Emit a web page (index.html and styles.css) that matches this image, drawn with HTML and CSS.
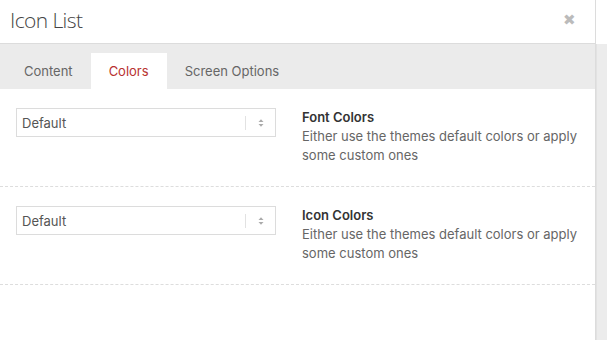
FILE: index.html
```html
<!DOCTYPE html>
<html lang="en">
<head>
    <meta charset="UTF-8">
    <title>Icon List</title>
    <link rel="stylesheet" href="styles.css">
</head>
<body>

    <div class="modal">
        <div class="modal-header">
            <h2 class="modal-title">Icon List</h2>
            <span class="modal-close">&#10006;</span>
        </div>

        <div class="modal-body">
            <div class="modal-main">
                <!-- Tabs -->
                <ul class="tabs">
                    <li class="tab">Content</li>
                    <li class="tab active">Colors</li>
                    <li class="tab">Screen Options</li>
                </ul>

                <div class="option-row">
                    <div class="option-field">
                        <div class="select">
                            <span class="select-value">Default</span>
                            <span class="select-arrows">
                                <svg width="6" height="10" viewBox="0 0 6 10">
                                    <path d="M0.5 4 L3 1.2 L5.5 4 Z" fill="#aaa"/>
                                    <path d="M0.5 6 L3 8.8 L5.5 6 Z" fill="#aaa"/>
                                </svg>
                            </span>
                        </div>
                    </div>
                    <div class="option-desc">
                        <h4>Font Colors</h4>
                        <p>Either use the themes default colors or apply some custom ones</p>
                    </div>
                </div>

                <div class="option-row">
                    <div class="option-field">
                        <div class="select">
                            <span class="select-value">Default</span>
                            <span class="select-arrows">
                                <svg width="6" height="10" viewBox="0 0 6 10">
                                    <path d="M0.5 4 L3 1.2 L5.5 4 Z" fill="#aaa"/>
                                    <path d="M0.5 6 L3 8.8 L5.5 6 Z" fill="#aaa"/>
                                </svg>
                            </span>
                        </div>
                    </div>
                    <div class="option-desc">
                        <h4>Icon Colors</h4>
                        <p>Either use the themes default colors or apply some custom ones</p>
                    </div>
                </div>
            </div>
            <div class="modal-side"></div>
        </div>
    </div>

</body>
</html>
```

FILE: styles.css
```css
body {
    font-family: Inter, "Liberation Sans", Arial, sans-serif;
    margin: 0;
    padding: 0;
    background: #fff;
    color: #333;
}
.modal {
    width: 607px;
    height: 340px;
    overflow: hidden;
}
.modal-header {
    height: 43px;
    display: flex;
    align-items: center;
    justify-content: space-between;
    border-bottom: 1px solid #dcdcdc;
    width: 595px;
    border-right: 1px solid #dcdcdc;
}
.modal-title {
    margin: 0 0 4px 10px;
    font-family: "Open Sans", sans-serif;
    font-weight: 300;
    font-size: 21px;
    color: #444;
    letter-spacing: -0.6px;
}
.modal-close {
    color: #bbb;
    font-size: 15px;
    margin-right: 19px;
    margin-bottom: 4px;
}
.modal-body {
    display: flex;
    height: 296px;
}
.modal-main {
    width: 595px;
    border-right: 1px solid #dcdcdc;
}
.modal-side {
    flex: 1;
    background: #ececec;
    border-left: 1px solid #e2e2e2;
}
.tabs {
    list-style: none;
    margin: 0;
    padding: 9px 0 0 6px;
    height: 36px;
    background: #ebebeb;
    display: flex;
}
.tab {
    padding: 0 18px;
    line-height: 37px;
    font-size: 13px;
    color: #666;
}
.tab.active {
    background: #fff;
    color: #b8312f;
}
.option-row {
    display: flex;
    padding: 19px 0 21px 16px;
    border-bottom: 1px dashed #ddd;
}
.option-field {
    width: 286px;
}
.select {
    width: 258px;
    height: 27px;
    border: 1px solid #dcdcdc;
    display: flex;
    align-items: center;
}
.select-value {
    flex: 1;
    padding-left: 5px;
    font-size: 13px;
    color: #555;
}
.select-arrows {
    width: 29px;
    height: 14px;
    border-left: 1px solid #e2e2e2;
    display: flex;
    align-items: center;
    justify-content: center;
}
.option-desc {
    width: 285px;
    font-size: 13px;
    line-height: 19px;
}
.option-desc h4 {
    margin: 0;
    font-size: 13px;
    font-weight: 600;
    color: #333;
}
.option-desc p {
    margin: 0;
    color: #666;
}
```
